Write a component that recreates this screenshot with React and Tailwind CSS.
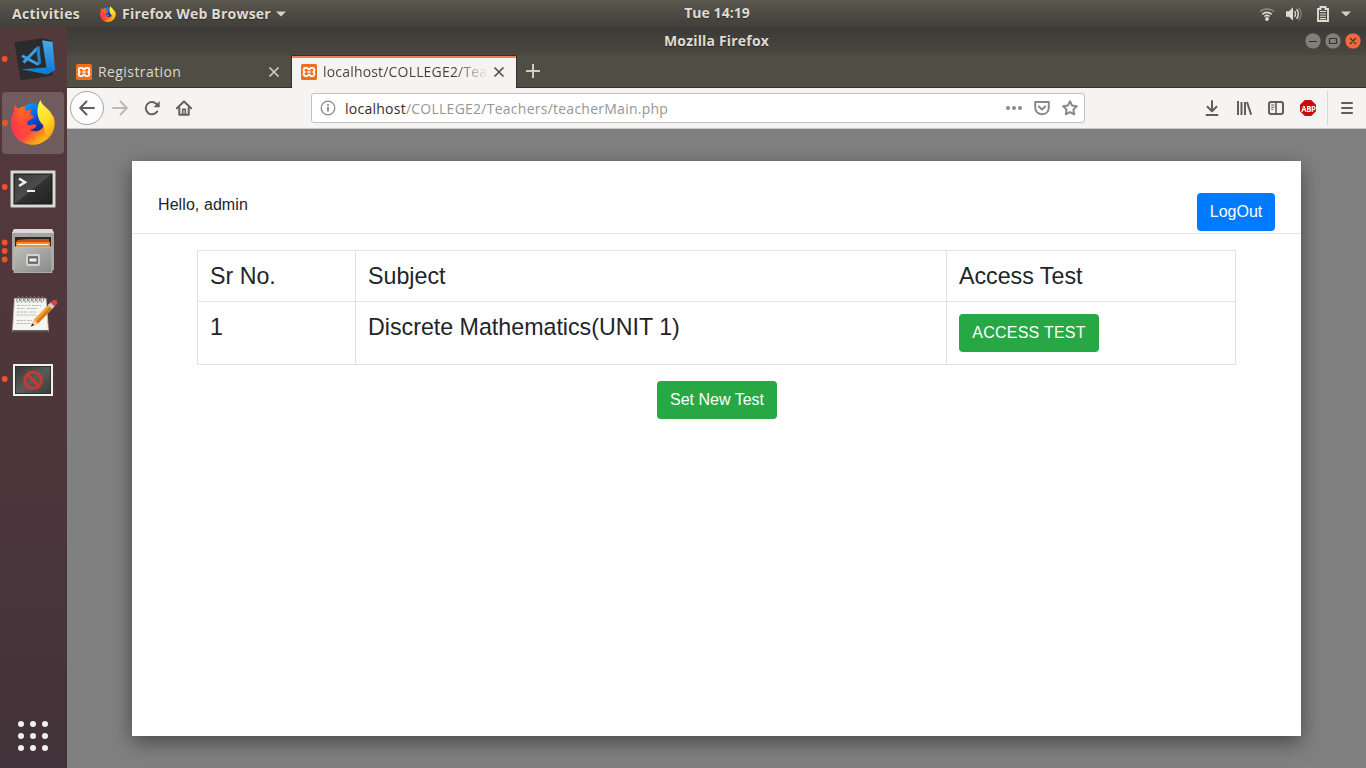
import React from "react";

const UI = "font-['Open_Sans','Noto_Sans',sans-serif]";

function Firefox({ id, className }) {
  const u = (n) => `url(#${id}${n})`;
  return (
    <svg viewBox="0 0 44 45" className={className}>
      <defs>
        <linearGradient id={`${id}a`} x1="0.3" y1="0.1" x2="0.95" y2="0.8">
          <stop offset="0" stopColor="#ff6a1c" />
          <stop offset="0.3" stopColor="#ff4a34" />
          <stop offset="0.55" stopColor="#ff4a3c" />
          <stop offset="0.8" stopColor="#ff9a18" />
          <stop offset="1" stopColor="#ffcb10" />
        </linearGradient>
        <linearGradient id={`${id}e`} x1="0" y1="0.5" x2="0.6" y2="0.4">
          <stop offset="0" stopColor="#ff1f6a" stopOpacity="0.75" />
          <stop offset="1" stopColor="#ff3a4a" stopOpacity="0" />
        </linearGradient>
        <linearGradient id={`${id}b`} x1="0.3" y1="0" x2="0.75" y2="0.85">
          <stop offset="0" stopColor="#00a0f8" />
          <stop offset="0.5" stopColor="#0a58dc" />
          <stop offset="1" stopColor="#1b1c7d" />
        </linearGradient>
        <linearGradient id={`${id}c`} x1="0.3" y1="0" x2="0.7" y2="1">
          <stop offset="0" stopColor="#fff347" />
          <stop offset="0.5" stopColor="#ffdc25" />
          <stop offset="1" stopColor="#ff980f" />
        </linearGradient>
      </defs>
      <circle cx="22" cy="20" r="16.5" fill={u("b")} />
      <path d="M4.500 4.500C4.600 6.500 5.500 8 7.500 8.800C9.500 7 12 6.500 14.500 6.500C14 8 14 9.500 15.500 11C17 10 19 9.500 20.500 9.800C19.600 11 19.400 13 19.800 14.500L23 16.300C22 19 19 19.500 16.500 21.300C16 22.500 16 24 17 25C19.500 25.800 21.500 24.200 24 24.600C26 25.300 25.500 27 23.500 28C22 29 20 29.500 18.500 29.500C26 34 34 29 34 21L43 16C45.500 31 36 44.800 22 44.800C9 44.800 0 35 0 23C0 17 1.600 14 3 12C2.600 9 3.200 7 4.500 4.500Z" fill={u("a")} />
      <path d="M4.500 4.500C5 7 6 8.500 8 10C12 20 10 34 22 44.800C9 44.800 0 35 0 23C0 17 1.600 14 3 12C2.600 9 3.200 7 4.500 4.500Z" fill={u("e")} />
      <path d="M29.700 0C30 4 34 6 37 9.500C41 13 44.500 20 43.500 26C42.500 32 40 36.500 35 40.500C36 34 33 29 32 25C25 19 25 6 29.700 0Z" fill={u("c")} />
    </svg>
  );
}

function Xampp() {
  return (
    <svg viewBox="0 0 16 16" className="size-4 shrink-0">
      <rect width="16" height="16" rx="1.500" fill="#ee6f1c" />
      <path d="M4.500 3.900h1.200c1.300 0 1.300 1.700 2.300 1.700s1-1.700 2.300-1.700h1.200c2.300 0 2.300 3 1 4.100c1.300 1.100 1.300 4.100-1 4.100h-1.200c-1.300 0-1.300-1.700-2.300-1.700s-1 1.700-2.300 1.700H4.500c-2.300 0-2.300-3-1-4.100c-1.300-1.100-1.300-4.100 1-4.100z" fill="none" stroke="#fff" strokeWidth="1.900" />
      <path d="M6 8h4" stroke="#fff" strokeWidth="1.300" />
    </svg>
  );
}

function CloseX({ className }) {
  return (
    <svg viewBox="0 0 12 12" className={`size-3 shrink-0 ${className}`} fill="none" stroke="currentColor" strokeWidth="1.700">
      <path d="M1.500 1.500l9 9M10.500 1.500l-9 9" />
    </svg>
  );
}

function Glyph({ children, className = "" }) {
  return (
    <svg viewBox="0 0 16 16" className={`size-4 shrink-0 ${className}`} fill="none" stroke="currentColor" strokeWidth="2" strokeLinecap="round" strokeLinejoin="round">
      {children}
    </svg>
  );
}

function DockItem({ dots = [], children }) {
  return (
    <svg viewBox="0 0 67 64" className="h-16 w-[67px] shrink-0">
      {children}
      {dots.map((y) => (
        <circle key={y} cx="4.700" cy={y} r="2.900" fill="#ee5522" />
      ))}
    </svg>
  );
}

function Dock() {
  return (
    <aside className="flex w-[67px] shrink-0 flex-col bg-linear-to-b from-[#54393b] via-[#4d363c] to-[#413339]">
      <DockItem dots={[32]}>
        <defs>
          <linearGradient id="vs" x1="0" y1="0" x2="0" y2="1">
            <stop offset="0" stopColor="#4aa9ea" />
            <stop offset="1" stopColor="#0b78cf" />
          </linearGradient>
        </defs>
        <path d="M14.500 15.500L42 11L51 13L52.500 48.500L20.500 53.500z" fill="#2b2b2d" />
        <path d="M42.200 13.200L52.500 15L55.200 43L47.500 47.500z" fill="url(#vs)" />
        <path d="M21 42.200L46.500 40.500L47.500 47.500z" fill="#1182d6" />
        <path d="M22 28.700L38.500 37.500M23.500 35.500L37.500 21" stroke="#3d9fe2" strokeWidth="3" fill="none" />
        <path d="M36 20L39.500 19L41 36L38.500 38.500z" fill="#2184cf" />
      </DockItem>
      <div className="flex h-16 w-[67px] shrink-0 items-center">
        <div className="ml-0.5 flex h-[62px] w-[62px] items-center rounded bg-[#705b5f]">
          <span className="size-1.5 rounded-full bg-[#ee5522]" />
          <Firefox id="dock" className="mb-0.5 ml-[3px] h-[45px] w-11" />
        </div>
      </div>
      <DockItem dots={[32]}>
        <defs>
          <linearGradient id="term" x1="0" y1="0" x2="1" y2="1">
            <stop offset="0" stopColor="#3a3b3a" />
            <stop offset="0.480" stopColor="#4b4c4b" />
            <stop offset="0.520" stopColor="#303130" />
            <stop offset="1" stopColor="#202220" />
          </linearGradient>
        </defs>
        <rect x="10.500" y="15.500" width="45" height="37" rx="1" fill="#d9d9d8" stroke="#8d8989" />
        <rect x="14" y="19" width="38" height="30" fill="url(#term)" stroke="#131413" />
        <path d="M19 23.500L25 27.200L19 31" fill="none" stroke="#eee" strokeWidth="2.500" />
        <path d="M27 36h8" stroke="#eee" strokeWidth="2" />
      </DockItem>
      <DockItem dots={[23.500, 32, 40.500]}>
        <defs>
          <linearGradient id="fileg" x1="0" y1="0" x2="1" y2="1">
            <stop offset="0" stopColor="#bdbdbb" />
            <stop offset="1" stopColor="#898987" />
          </linearGradient>
        </defs>
        <path d="M14 10h38l2 4v37H12V14z" fill="#a5a3a3" />
        <path d="M14 10h38l2 4H12z" fill="#ddd6da" />
        <rect x="15" y="18" width="36" height="10" fill="#292624" />
        <path d="M17 21l10-1h22v8H16z" fill="#c94e16" />
        <path d="M16 23h34v5H16z" fill="#ee8523" />
        <path d="M17.500 25.500h31" stroke="#fff4db" strokeWidth="1.200" />
        <rect x="14" y="28" width="38" height="25.500" fill="url(#fileg)" stroke="#bdbdbb" strokeWidth="0.800" />
        <rect x="27" y="36" width="12" height="10" rx="1" fill="#777" stroke="#d2d2d0" strokeWidth="2" />
        <rect x="29" y="39" width="8" height="4" fill="#eee" stroke="#444" strokeWidth="0.700" />
      </DockItem>
      <DockItem>
        <path d="M14.500 15.500H46L48.500 48.500H12.500z" fill="#f5f5f1" stroke="#c4c0c0" strokeWidth="0.800" />
        <path d="M12.500 48h36" stroke="#34302e" strokeWidth="1.300" />
        {[18, 22, 26, 30, 34, 38, 42].map((x) => (
          <path key={x} d={`M${x} 19.500c-2 0-1-6 .5-6s1.500 4 .5 5`} fill="none" stroke="#777" strokeWidth="1" />
        ))}
        <path d="M17 22.500h13M32 22.500h9M17 25.500h8M27 25.500h10M16.500 29h12M30 29h6M16.500 32h20M16.500 37.500h9M27 37.500h5M16.500 40.500h14" stroke="#b5b5b2" strokeWidth="0.900" strokeDasharray="3 0.700" />
        <path d="M31 43.500L34 36.500L49 21L53 25L38 40.500z" fill="#f2a134" />
        <path d="M36 38.500L51 23L53 25L38 40.500z" fill="#d9751c" />
        <path d="M31 43.500L34 36.500L38 40.500z" fill="#f1cf9b" />
        <path d="M31 43.500L32.200 40.600L34.200 42.300z" fill="#222" />
        <path d="M48 22L51 19L55 23L52 26z" fill="#cfcfcf" />
        <path d="M50.300 19.500C52 17 56 16 57 18C58 20.500 56.500 22 54.500 23.500z" fill="#d94545" />
      </DockItem>
      <DockItem dots={[32]}>
        <defs>
          <linearGradient id="noent" x1="0" y1="0" x2="1" y2="1">
            <stop offset="0" stopColor="#333634" />
            <stop offset="0.500" stopColor="#5a5c5b" />
            <stop offset="1" stopColor="#3b3d3c" />
          </linearGradient>
        </defs>
        <rect x="13" y="17" width="40" height="32" fill="#f1f1ef" />
        <rect x="15.500" y="19.500" width="35" height="27" fill="url(#noent)" stroke="#303231" />
        <circle cx="33" cy="33.300" r="8.200" fill="none" stroke="#cd3731" strokeWidth="3" />
        <path d="M27.500 27.500l11 11.500" stroke="#cd3731" strokeWidth="3" />
      </DockItem>
      <div className="grow" />
      <svg viewBox="0 0 67 64" className="h-16 w-[67px] shrink-0">
        {[20, 32, 44].map((y) => [21, 33, 45].map((x) => <circle key={`${x}-${y}`} cx={x} cy={y} r="3" fill="#f1f0ef" />))}
      </svg>
    </aside>
  );
}

function TopBar() {
  return (
    <header className={`${UI} grid h-[27px] shrink-0 grid-cols-[663px_108px_1fr] items-center bg-linear-to-b from-[#5a574e] to-[#413f3a] text-[14px] font-bold text-[#dfdbd2] [text-shadow:0_1px_1px_rgba(0,0,0,0.4)]`}>
      <div className="flex items-center pl-3">
        <span className="w-[88px] tracking-[0.3px] whitespace-nowrap">Activities</span>
        <Firefox id="bar" className="size-4" />
        <span className="ml-1.5 w-[149px] tracking-[0.22px] whitespace-nowrap">Firefox Web Browser</span>
        <svg viewBox="0 0 10 6" className="ml-[5px] h-1.5 w-2.5"><path d="M0 .5h10L5 5.500z" fill="#d3d0c8" /></svg>
      </div>
      <span className="-mt-0.5 text-center tracking-[0.05px] whitespace-nowrap">Tue 14:19</span>
      <div className="flex items-center justify-end pr-[15px] text-[#dedbd4]">
        <svg viewBox="0 0 16 16" className="mr-[-1px] size-4" fill="none" stroke="currentColor" strokeWidth="1.600">
          <path d="M1 5.700C4.500 2.200 11.500 2.200 15 5.700" opacity=".4" />
          <path d="M3.300 8.300C6 5.700 10 5.700 12.700 8.300M5.400 10.500C7 9.200 9 9.200 10.600 10.500" />
          <circle cx="8" cy="13" r="1.900" fill="currentColor" stroke="none" />
        </svg>
        <svg viewBox="0 0 16 16" className="ml-3 size-4" fill="none" stroke="currentColor" strokeWidth="1.500">
          <path d="M0 5.300h3l4-4v13.400l-4-4H0z" fill="currentColor" stroke="none" />
          <path d="M8.500 5.300c1.300 1.400 1.300 4 0 5.400M10.500 3.300c2.500 2.400 2.500 7 0 9.400" />
          <path d="M12.500 1.500c3.500 3.400 3.500 9.600 0 13" opacity=".35" />
        </svg>
        <svg viewBox="0 0 12 16" className="ml-[15px] h-4 w-3" fill="none" stroke="currentColor" strokeWidth="1.900">
          <path d="M3.500 3V1h5v2H11v12H1V3z" />
          <path d="M3 5.500h6M3 8h6M3 10.300h6M3 12.600h6" strokeWidth="1.100" />
        </svg>
        <svg viewBox="0 0 10 6" className="ml-3 h-1.5 w-2.5"><path d="M0 .5h10L5 5.500z" fill="#d3d0c8" /></svg>
      </div>
    </header>
  );
}

function TitleBar() {
  return (
    <div className={`${UI} grid h-7 shrink-0 grid-cols-[1fr_120px_1fr] items-center bg-linear-to-b from-[#3b3a36] to-[#4b4841] text-[14px] font-bold text-[#dfdbd2] [text-shadow:0_1px_1px_rgba(0,0,0,0.4)]`}>
      <span />
      <span className="-mt-0.5 text-center tracking-[0.18px] whitespace-nowrap">Mozilla Firefox</span>
      <svg viewBox="0 0 60 18" className="mr-[3px] h-[18px] w-[60px] justify-self-end" fill="none">
        <circle cx="10" cy="9" r="8" fill="#817f78" stroke="#34332f" strokeWidth="0.500" />
        <circle cx="30" cy="9" r="8" fill="#817f78" stroke="#34332f" strokeWidth="0.500" />
        <circle cx="50" cy="9" r="8" fill="#f06a3c" stroke="#34332f" strokeWidth="0.500" />
        <path d="M6 9.500h8M26.500 6.500h7v5h-7zM47 6l6 6M53 6l-6 6" stroke="#34332f" strokeWidth="1.200" />
      </svg>
    </div>
  );
}

function Tabs() {
  return (
    <div className={`${UI} flex h-[33px] shrink-0 bg-[#504d45] text-[14px]`}>
      <div className="flex w-[224px] items-center border-b border-[#33322e] pt-px pl-[9px] text-[#dcd9d2]">
        <Xampp />
        <span className="ml-1.5 w-[170px] tracking-[0.42px]">Registration</span>
        <CloseX className="text-[#d0cdc6]" />
      </div>
      <div className="flex w-[226px] items-center border-x border-t border-[#33322e] bg-[#f5f4f3] text-[#44423f] shadow-[inset_0_2px_0_#f27e54]">
        <div className="-mt-px ml-[9px] flex items-center">
          <Xampp />
          <span className="ml-1.5 w-[165px] bg-linear-to-r from-[#44423f] from-80% to-transparent bg-clip-text tracking-[0.18px] whitespace-nowrap text-transparent">localhost/COLLEGE2/Tea</span>
          <CloseX className="ml-[5px] text-[#55534f]" />
        </div>
      </div>
      <div className="flex grow items-center border-b border-[#33322e] pl-[9px]">
        <svg viewBox="0 0 14 14" className="size-3.5" stroke="#d0cdc6" strokeWidth="2"><path d="M7 0v14M0 7h14" /></svg>
      </div>
    </div>
  );
}

function NavBar() {
  return (
    <div className={`${UI} flex h-[41px] shrink-0 items-center border-b border-[#c9c8c6] bg-[#f5f4f3] text-[#605f5c]`}>
      <div className="ml-[3px] flex size-[34px] items-center justify-center rounded-full border border-[#a8a6a3] bg-[#fdfdfd]">
        <Glyph><path d="M15 8H1.500M7.500 1.500L1.200 8l6.300 6.500" /></Glyph>
      </div>
      <Glyph className="ml-2 text-[#bab9b7]"><path d="M1 8h13.500M8.500 1.500L14.800 8l-6.300 6.500" /></Glyph>
      <Glyph className="ml-4"><path d="M13.200 11.500A6.200 6.200 0 1 1 13 4.500" /><path d="M15.700 1V7.200H9.500z" fill="currentColor" stroke="none" /></Glyph>
      <Glyph className="ml-4"><path d="M1 8.300L8 1.400l7 6.900M3.300 8v6.700h9.400V8" /><path d="M6.700 14V9.300h2.600V14" strokeWidth="1.600" /></Glyph>
      <div className="ml-[119px] flex h-[30px] w-[774px] items-center rounded-[3px] border border-[#c4c2bf] bg-white pr-1.5 pl-2 text-[#8a8986]">
        <svg viewBox="0 0 16 16" className="size-4" fill="none" stroke="#858481"><circle cx="8" cy="8" r="6.800" strokeWidth="1.200" /><path d="M8 7v4.500M8 4v1.700" strokeWidth="1.800" /></svg>
        <span className="ml-[9px] grow text-[14px] tracking-[0.25px] whitespace-nowrap text-[#979694]"><span className="text-[#2f2e2c]">localhost</span>/COLLEGE2/Teachers/teacherMain.php</span>
        <svg viewBox="0 0 16 16" className="size-4" fill="currentColor"><circle cx="2" cy="8" r="2" /><circle cx="8" cy="8" r="2" /><circle cx="14" cy="8" r="2" /></svg>
        <Glyph className="ml-3"><path d="M1.200 2h13.600v5.500c0 9-13.600 9-13.600 0z" /><path d="M4.800 6.500L8 9.500l3.200-3" /></Glyph>
        <Glyph className="ml-3"><path d="M8 1.300l2.100 4.300 4.700.7-3.400 3.300.8 4.700L8 12.100l-4.200 2.200.8-4.700L1.200 6.300l4.700-.7z" /></Glyph>
      </div>
      <Glyph className="ml-[119px]"><path d="M8 1v10M3.500 6.800L8 11.300l4.500-4.500M2.500 15h11" /></Glyph>
      <Glyph className="ml-4"><path d="M2 1v14M5.500 2v13M9 2v13M11 2L15.200 14.800" strokeLinecap="butt" /></Glyph>
      <Glyph className="ml-4"><rect x="1" y="2" width="14" height="12" rx="2" /><path d="M8 2v12" strokeWidth="1.600" /><path d="M3.500 5h2.500M3.500 7.200h2.500M3.500 9.400h1.500" strokeWidth="1" /></Glyph>
      <div className="ml-4 flex size-4 items-center justify-center bg-[#cc0b0b] [clip-path:polygon(30%_0,70%_0,100%_30%,100%_70%,70%_100%,30%_100%,0_70%,0_30%)]">
        <span className="scale-x-[0.85] font-['Open_Sans',sans-serif] text-[9px] leading-none font-bold tracking-[-0.4px] text-white">ABP</span>
      </div>
      <div className="ml-[11px] h-[34px] w-px bg-[#dad8d6]" />
      <Glyph className="ml-[11px]"><path d="M3 3h10M3 8h10M3 13h10" /></Glyph>
    </div>
  );
}

function Button({ className, children }) {
  return <button className={`flex h-[38px] items-center justify-center rounded text-base whitespace-nowrap text-white ${className}`}>{children}</button>;
}

function Cell({ children }) {
  return <div className="border-r border-b border-[#dee2e6] px-3 pt-3 text-[23.22px] leading-[26px]">{children}</div>;
}

function Page() {
  return (
    <main className="grow bg-[#808080] px-[65px] pt-8 pb-8 font-['Liberation_Sans',Arial,sans-serif] text-[#212529]">
      <section className="h-[575px] bg-white shadow-[0_6px_20px_0_rgba(0,0,0,0.45)]">
        <div className="flex h-[73px] items-start justify-between border-b border-black/10 px-[26px] pt-8">
          <span className="text-base leading-6 tracking-[0.08px]">Hello, admin</span>
          <Button className="w-[78px] bg-[#007bff]">LogOut</Button>
        </div>
        <div className="mt-4 ml-[65px] grid w-[1039px] grid-cols-[158px_591px_289px] grid-rows-[51px_63px] border-t border-l border-[#dee2e6]">
          <Cell>Sr No.</Cell>
          <Cell>Subject</Cell>
          <Cell>Access Test</Cell>
          <Cell>1</Cell>
          <Cell>Discrete Mathematics(UNIT 1)</Cell>
          <Cell><Button className="w-[140px] bg-[#28a745] tracking-[0.25px]">ACCESS TEST</Button></Cell>
        </div>
        <div className="mt-4 flex justify-center"><Button className="w-[120px] bg-[#28a745] pl-px">Set New Test</Button></div>
      </section>
    </main>
  );
}

export default function App() {
  return (
    <div className="flex h-[768px] w-[1366px] flex-col overflow-hidden">
      <TopBar />
      <div className="flex grow">
        <Dock />
        <div className="flex grow flex-col">
          <TitleBar />
          <Tabs />
          <NavBar />
          <Page />
        </div>
      </div>
    </div>
  );
}
